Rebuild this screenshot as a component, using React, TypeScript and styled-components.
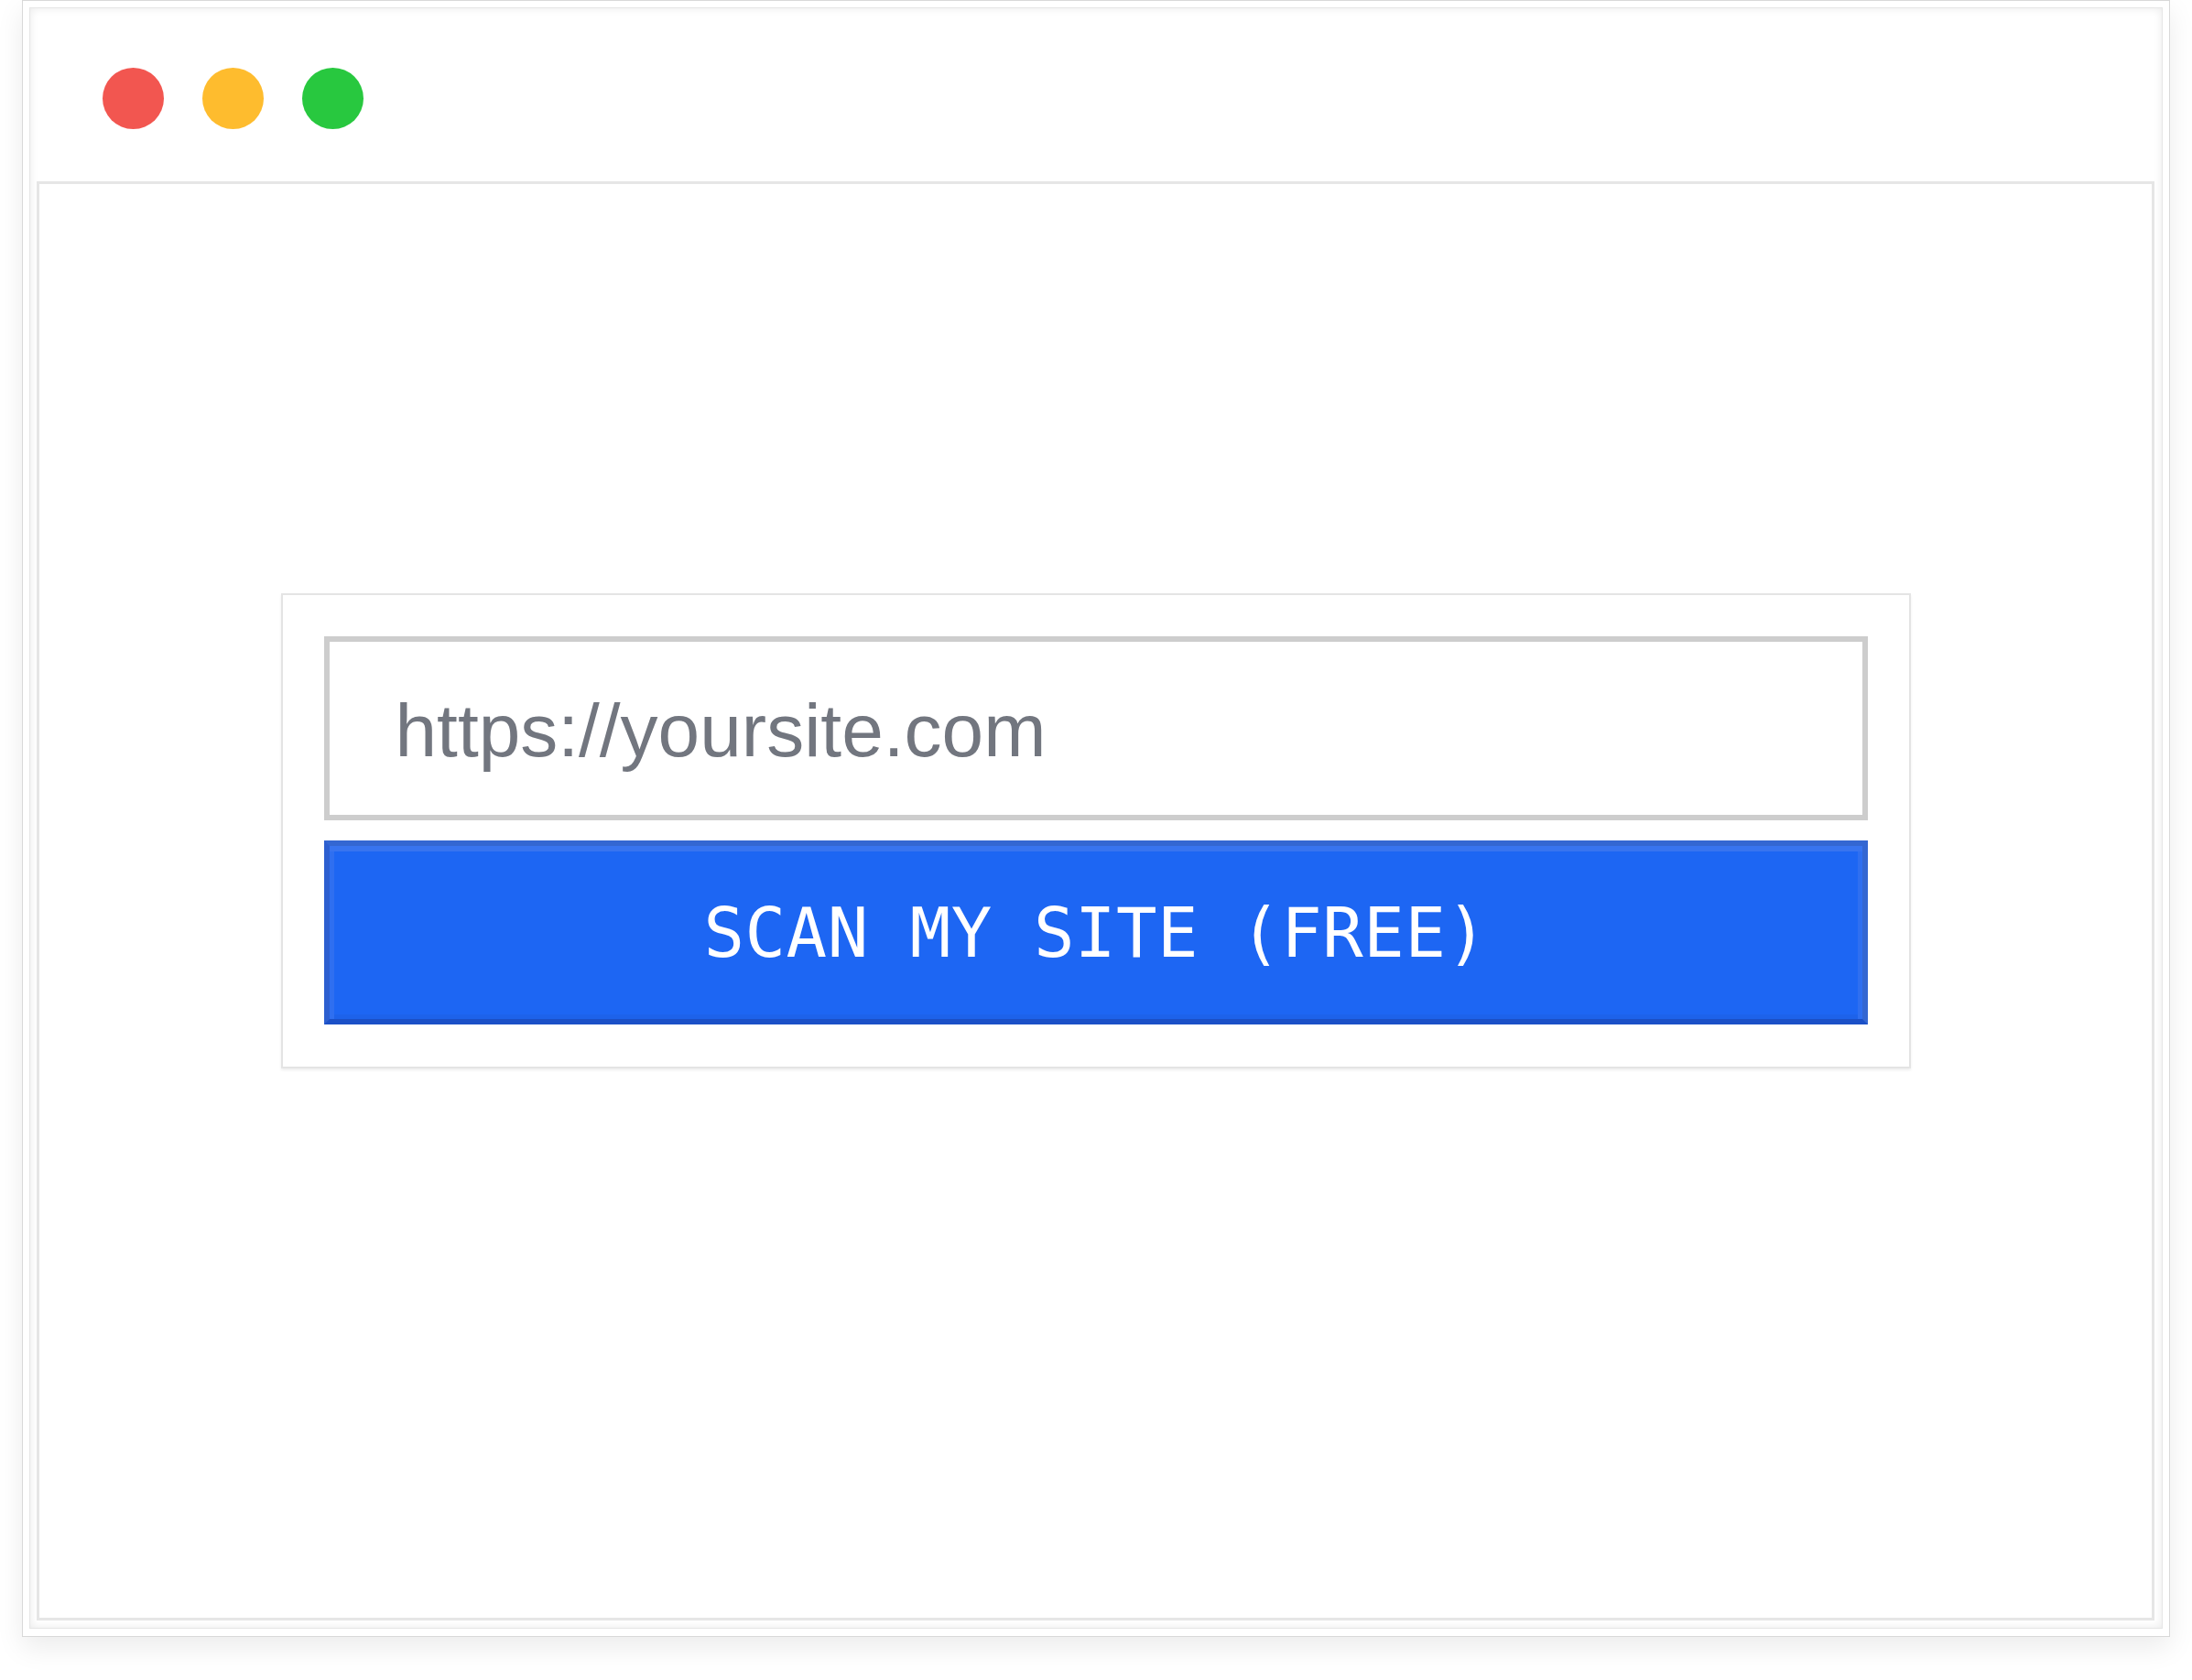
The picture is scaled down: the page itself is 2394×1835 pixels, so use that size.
import React from 'react'
import styled, {createGlobalStyle} from 'styled-components'

const GlobalStyle = createGlobalStyle`
  html, body {
    margin: 0;
    padding: 0;
    background: #ffffff;
  }
  body {
    font-family: "Liberation Sans", Arial, sans-serif;
  }
`

const Page = styled.div`
  width: 2394px;
  height: 1835px;
  padding-left: 24px;
  box-sizing: border-box;
  overflow: hidden;
`

const Window = styled.div`
  width: 2346px;
  height: 1788px;
  box-sizing: border-box;
  background: #ffffff;
  border: 1px solid #d8d8d8;
  box-shadow: 0 12px 28px rgba(0, 0, 0, 0.08);
  padding: 7px 7px 8px 7px;
`

const Frame = styled.div`
  height: 100%;
  box-sizing: border-box;
  border: 1px solid #e6e6e6;
  box-shadow: inset 0 0 10px rgba(0, 0, 0, 0.09);
  display: flex;
  flex-direction: column;
  padding: 0 8px 8px 7px;
`

const TitleBar = styled.div`
  height: 189px;
  flex-shrink: 0;
  display: flex;
  align-items: center;
  gap: 42px;
  padding: 8px 0 0 72px;
  box-sizing: border-box;
`

const Light = styled.span<{ $color: string }>`
  width: 67px;
  height: 67px;
  border-radius: 50%;
  background: ${(props) => props.$color};
`

const Content = styled.div`
  flex: 1;
  box-sizing: border-box;
  border: 3px solid #e6e6e6;
  background: #ffffff;
  display: flex;
  justify-content: center;
  align-items: flex-start;
  padding-top: 447px;
`

const Card = styled.form`
  width: 1780px;
  box-sizing: border-box;
  border: 2px solid #e4e4e4;
  box-shadow: 0 2px 3px rgba(0, 0, 0, 0.07);
  padding: 45px 45px 46px;
  display: flex;
  flex-direction: column;
  gap: 22px;
  background: #ffffff;
`

const UrlInput = styled.input`
  height: 201px;
  box-sizing: border-box;
  border: 6px solid #cdcdcd;
  padding: 4px 0 0 72px;
  margin: 0;
  outline: none;
  font-family: "Liberation Sans", Arial, sans-serif;
  font-size: 82px;
  color: #72767f;
  background: #ffffff;
  &::placeholder {
    color: #72767f;
    opacity: 1;
  }
`

const ScanButton = styled.button`
  height: 201px;
  box-sizing: border-box;
  margin: 0;
  border: 6px solid #3467d2;
  border-bottom-color: #1b50c7;
  border-left-color: #2c5fd0;
  box-shadow: inset 0 6px 0 #3874ef, inset 5px 0 0 #2f6ff0, inset -5px 0 0 #2f6ff0, inset 0 -5px 0 #1d62ea;
  background: #1d66f3;
  color: #ffffff;
  font-family: "DejaVu Sans Mono", "Liberation Mono", monospace;
  font-size: 74px;
  letter-spacing: 0.5px;
  cursor: pointer;
`

function App() {
    return (
        <>
            <GlobalStyle/>
            <Page>
                <Window>
                    <Frame>
                        <TitleBar>
                            <Light $color="#f25650"/>
                            <Light $color="#febc2e"/>
                            <Light $color="#28c83f"/>
                        </TitleBar>
                        <Content>
                            <Card onSubmit={(event) => event.preventDefault()}>
                                <UrlInput type="text" placeholder="https://yoursite.com"/>
                                <ScanButton type="submit">SCAN MY SITE (FREE)</ScanButton>
                            </Card>
                        </Content>
                    </Frame>
                </Window>
            </Page>
        </>
    )
}

export default App
